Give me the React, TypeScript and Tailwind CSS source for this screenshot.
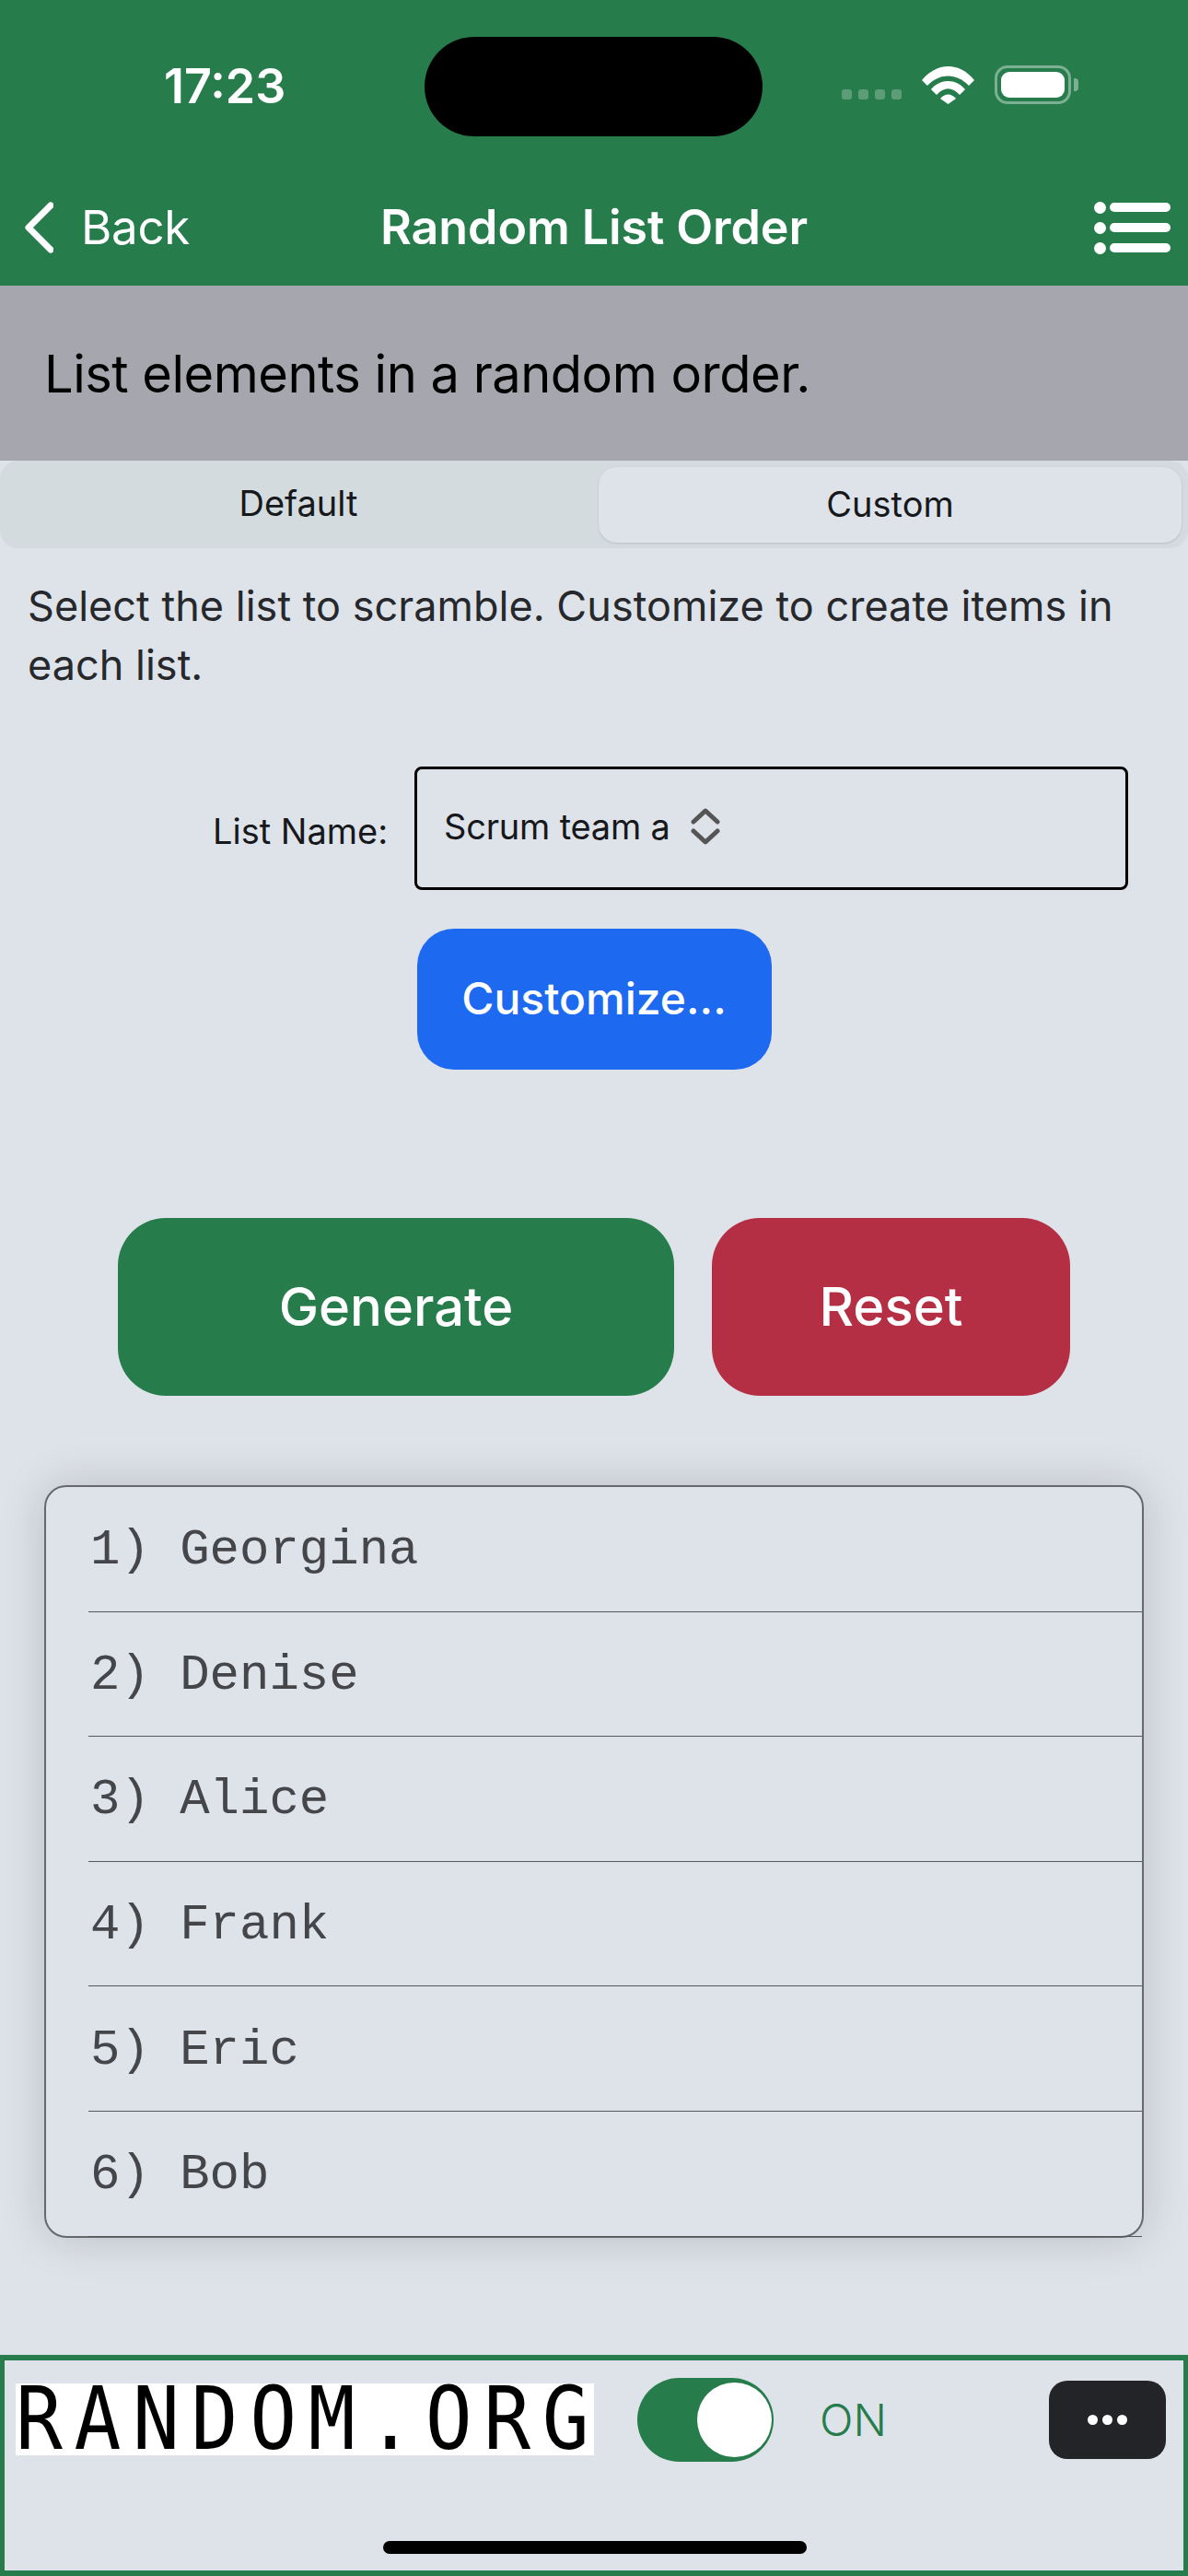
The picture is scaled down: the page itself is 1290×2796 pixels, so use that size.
const SANS = "font-['Inter','Liberation_Sans',sans-serif]";

const names = ["Georgina", "Denise", "Alice", "Frank", "Eric", "Bob"];

const StatusIcons = () => (
  <div className="flex items-center">
    <div className="flex gap-[7px] mt-[21px] mr-[22px]">
      {[0, 1, 2, 3].map((i) => (
        <div key={i} className="w-[11px] h-[11px] rounded-[3px] bg-white/25" />
      ))}
    </div>
    <svg width="57" height="41" viewBox="0 0 57 41" className="mr-[22px]">
      <path d="M0 15 C16 -5 41 -5 57 15 L51 21 C38 7 19 7 6 21 Z" fill="#fff" />
      <path d="M10 25 C20 13 37 13 47 25 L41 31 C33 22 24 22 16 31 Z" fill="#fff" />
      <path d="M20 35 C25 29 32 29 37 35 L28.5 41 Z" fill="#fff" />
    </svg>
    <div className="w-[83px] h-[42px] rounded-[14px] border-[3px] border-white/40 p-[4px]">
      <div className="w-full h-full rounded-[9px] bg-white" />
    </div>
    <div className="w-[5px] h-[14px] ml-[3px] rounded-r-[4px] bg-white/40" />
  </div>
);

const MenuIcon = () => (
  <div className="flex flex-col gap-[9px]">
    {[0, 1, 2].map((i) => (
      <div key={i} className="flex items-center gap-[4px]">
        <div className="w-[13px] h-[13px] rounded-full bg-white" />
        <div className="w-[66px] h-[10px] rounded-full bg-white" />
      </div>
    ))}
  </div>
);

export default function App() {
  return (
    <div className={`${SANS} relative flex flex-col w-[1290px] h-[2796px] bg-[#dee2e9] text-[#16181b] overflow-hidden`}>
      <div className="absolute left-[461px] top-[40px] w-[367px] h-[108px] rounded-[54px] bg-black" />

      <header className="bg-[#267c4b] text-white h-[310px] shrink-0">
        <div className="flex items-center justify-between h-[184px] pl-[178px] pr-[119px]">
          <span className="text-[52px] font-semibold pt-[3px]">17:23</span>
          <StatusIcons />
        </div>
        <div className="relative flex items-center justify-between h-[126px] pl-[27px] pr-[19px]">
          <div className="flex items-center gap-[30px]">
            <svg width="31" height="56" viewBox="0 0 31 56" fill="none">
              <path d="M28 4 L4 28 L28 52" stroke="#fff" strokeWidth="7" strokeLinecap="round" strokeLinejoin="round" />
            </svg>
            <span className="text-[51px] font-normal tracking-[-0.3px]">Back</span>
          </div>
          <span className="absolute left-0 right-0 text-center text-[52px] font-semibold tracking-[-0.1px]">Random List Order</span>
          <MenuIcon />
        </div>
      </header>

      <div className="flex items-center h-[190px] pl-[48px] pt-[2px] bg-[#a6a6af] text-[56px] tracking-[-0.5px] text-black shrink-0">
        List elements in a random order.
      </div>

      <div className="flex h-[95px] p-[7px] pl-0 bg-[#d3dbde] rounded-[20px] shrink-0">
        <div className="flex-1 flex items-center justify-center text-[38px] font-normal pb-[2px] pr-[2px]">Default</div>
        <div className="flex items-center justify-center w-[633px] h-[82px] rounded-[20px] bg-[#dee2e9] text-[38px] font-normal pb-[2px] shadow-sm">
          Custom
        </div>
      </div>

      <p className="px-[30px] mt-[31px] text-[45px] tracking-[0.02px] leading-[64px] text-[#26282c]">
        Select the list to scramble. Customize to create items in each list.
      </p>

      <div className="flex items-center mt-[78px] pl-[231px]">
        <span className="text-[38px] w-[187px] pt-[6px] whitespace-nowrap">List Name:</span>
        <div className="flex items-center gap-[21px] ml-[32px] w-[775px] h-[134px] pb-[4px] pl-[29px] rounded-[8px] border-[3px] border-black">
          <span className="text-[38px] tracking-[-0.2px]">Scrum team a</span>
          <svg width="34" height="40" viewBox="0 0 34 40" fill="none" stroke="#555" strokeWidth="5" strokeLinecap="round" strokeLinejoin="round">
            <path d="M4 15 L17 3 L30 15" />
            <path d="M4 25 L17 37 L30 25" />
          </svg>
        </div>
      </div>

      <div className="flex justify-center mt-[42px]">
        <button className="w-[385px] h-[153px] rounded-[40px] bg-[#1d69f0] text-white text-[48px] font-medium pb-[2px]">
          Customize...
        </button>
      </div>

      <div className="flex pl-[128px] gap-[41px] mt-[161px]">
        <button className="w-[604px] h-[193px] rounded-[52px] bg-[#267c4b] text-white text-[58px] font-medium">
          Generate
        </button>
        <button className="w-[389px] h-[193px] rounded-[52px] bg-[#b52f44] text-white text-[58px] font-medium">
          Reset
        </button>
      </div>

      <div className="mx-[48px] mt-[97px] h-[817px] rounded-[24px] border-2 border-[#66686c] shadow-[0_0_50px_rgba(0,0,0,0.16)] bg-[#dee2e9] pl-[46px] shrink-0">
        {names.map((name, i) => (
          <div
            key={name}
            className="flex items-center h-[135.6px] pl-[2px] pt-[3px] border-b border-[#55575b] font-['Liberation_Mono','Courier_New',monospace] text-[54px] whitespace-pre text-[#44464a]"
          >
            {`${i + 1}) ${name}`}
          </div>
        ))}
      </div>

      <footer className="relative flex items-start mt-auto h-[240px] border-x-[5px] border-y-[6px] border-[#267c4b] shrink-0">
        <div className="w-[628px] h-[78px] ml-[12px] mt-[25px] bg-white text-black font-['DejaVu_Sans_Mono',monospace] text-[94px] leading-[78px] whitespace-nowrap">
          <span className="inline-block origin-left scale-x-[0.9] tracking-[14px]">RANDOM.ORG</span>
        </div>
        <div className="flex items-center justify-end w-[148px] h-[91px] ml-[47px] mt-[19px] pr-[2px] rounded-full bg-[#267c4b]">
          <div className="w-[81px] h-[81px] rounded-full bg-white" />
        </div>
        <span className="ml-[50px] mt-[29px] text-[48px] font-light text-[#267c4b]">ON</span>
        <div className="flex items-center justify-center gap-[5px] w-[127px] h-[85px] ml-[176px] mt-[22px] rounded-[20px] bg-[#232428]">
          {[0, 1, 2].map((i) => (
            <div key={i} className="w-[11px] h-[11px] rounded-full bg-white" />
          ))}
        </div>
        <div className="absolute left-[411px] top-[196px] w-[460px] h-[14px] rounded-full bg-black" />
      </footer>
    </div>
  );
}
